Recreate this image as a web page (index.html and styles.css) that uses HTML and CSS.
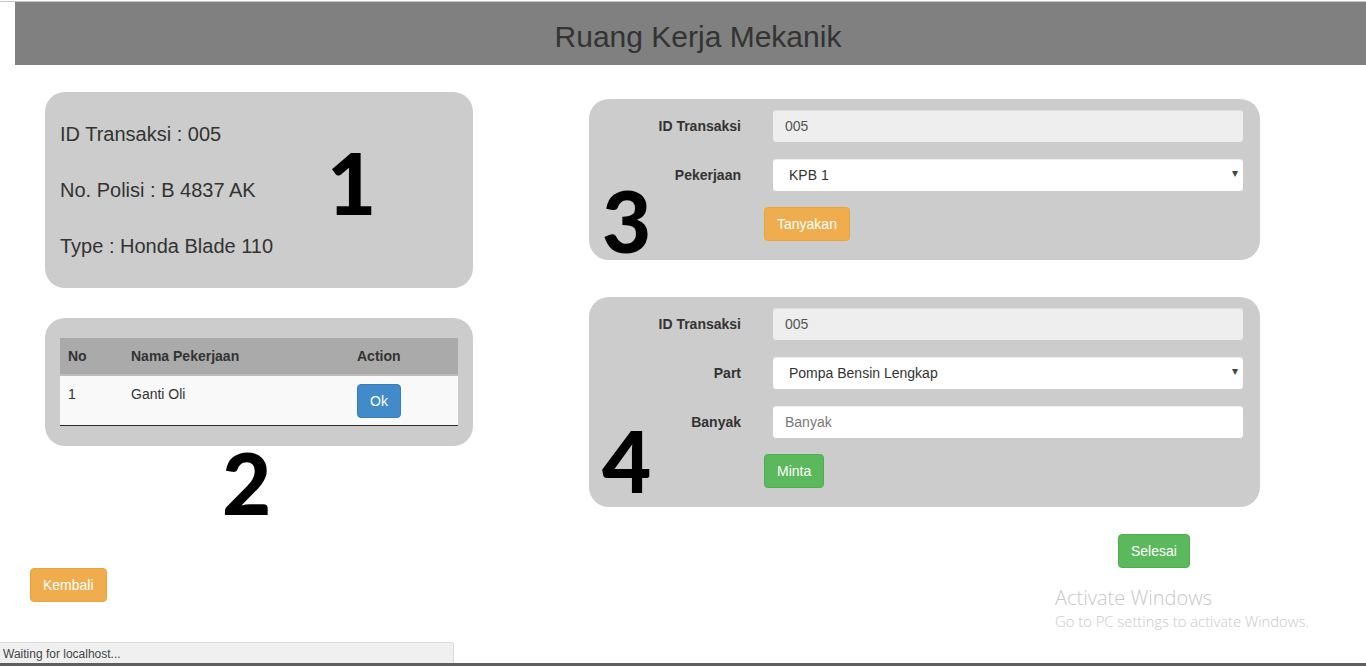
FILE: index.html
```html
<!DOCTYPE html>
<html lang="id">
<head>
<meta charset="utf-8">
<title>Ruang Kerja Mekanik</title>
<link rel="stylesheet" href="styles.css">
</head>
<body>
<div class="topline"></div>
<header class="header"><h1 class="title">Ruang Kerja Mekanik</h1></header>
<main class="main">
  <section class="left">
    <div class="panel info">
      <p class="info-line">ID Transaksi : 005</p>
      <p class="info-line">No. Polisi : B 4837 AK</p>
      <p class="info-line">Type : Honda Blade 110</p>
      <span class="mark mark-1">1</span>
    </div>
    <div class="panel jobs">
      <table class="table">
        <thead>
          <tr><th class="c-no">No</th><th class="c-name">Nama Pekerjaan</th><th class="c-act">Action</th></tr>
        </thead>
        <tbody>
          <tr><td>1</td><td>Ganti Oli</td><td><button class="btn btn-primary" type="button">Ok</button></td></tr>
        </tbody>
      </table>
    </div>
    <div class="mark-2">2</div>
    <div class="back-row"><button class="btn btn-warning" type="button">Kembali</button></div>
  </section>
  <section class="right">
    <form class="panel form form-ask">
      <div class="form-row"><label class="label">ID Transaksi</label><input class="control readonly" type="text" value="005" readonly></div>
      <div class="form-row"><label class="label">Pekerjaan</label><div class="select-wrap"><select class="control select"><option>KPB 1</option></select></div></div>
      <div class="btn-row"><button class="btn btn-warning" type="button">Tanyakan</button></div>
      <span class="mark mark-3">3</span>
    </form>
    <form class="panel form form-part">
      <div class="form-row"><label class="label">ID Transaksi</label><input class="control readonly" type="text" value="005" readonly></div>
      <div class="form-row"><label class="label">Part</label><div class="select-wrap"><select class="control select"><option>Pompa Bensin Lengkap</option></select></div></div>
      <div class="form-row"><label class="label">Banyak</label><input class="control" type="text" placeholder="Banyak"></div>
      <div class="btn-row"><button class="btn btn-success" type="button">Minta</button></div>
      <span class="mark mark-4">4</span>
    </form>
    <div class="done-row"><button class="btn btn-success" type="button">Selesai</button></div>
  </section>
</main>
<div class="watermark">
  <div class="wm-title">Activate Windows</div>
  <div class="wm-sub">Go to PC settings to activate Windows.</div>
</div>
<div class="statusbar">Waiting for localhost...</div>
<div class="taskbar"></div>
</body>
</html>
```
FILE: styles.css
```css
* { box-sizing: border-box; }
html, body { margin: 0; padding: 0; }
body {
  width: 1366px;
  height: 666px;
  overflow: hidden;
  position: relative;
  background: #fff;
  font-family: "Liberation Sans", Arial, sans-serif;
  font-size: 14px;
  color: #333;
}
.topline { margin-top: 1px; height: 1px; background: #c4c4c4; }
.header {
  margin-left: 15px;
  height: 63px;
  background: #808080;
  padding: 6px 0 0 15px;
}
.title {
  margin: 0;
  font-size: 30px;
  font-weight: normal;
  line-height: 57px;
  text-align: center;
  color: #333;
}
.main {
  display: flex;
  align-items: flex-start;
  padding: 27px 0 0 45px;
}
.left { width: 428px; }
.right { width: 671px; margin-left: 116px; padding-top: 7px; }
.panel {
  position: relative;
  background: #ccc;
  border-radius: 20px;
}
.info { height: 196px; padding: 14px 15px; }
.info-line { margin: 0; font-size: 20px; line-height: 56px; }
.mark {
  position: absolute;
  font-family: Lato, "DejaVu Sans", sans-serif;
  font-weight: 900;
  font-size: 85px;
  line-height: 85px;
  color: #000;
}
.mark-1 { left: 282px; top: 48px; }
.mark-3 { left: 13px; top: 79px; }
.mark-4 { left: 13px; top: 121px; }
.mark-2 {
  margin-top: -6px;
  height: 88px;
  padding-left: 177px;
  font-family: Lato, "DejaVu Sans", sans-serif;
  font-weight: 900;
  font-size: 85px;
  line-height: 85px;
  color: #000;
}
.jobs { margin-top: 30px; padding: 20px 14px 20px 15px; }
.table { width: 398px; border-collapse: collapse; }
.table th {
  background: #aaa;
  text-align: left;
  font-weight: bold;
  padding: 8px;
  line-height: 20px;
  border-bottom: 2px solid #bdbdbd;
}
.c-no { width: 63px; }
.c-name { width: 226px; }
.table td {
  background: #f9f9f9;
  padding: 8px 8px 7px;
  line-height: 20px;
  vertical-align: top;
  border-bottom: 1px solid #2b2b2b;
}
.btn {
  display: inline-block;
  font-family: "Liberation Sans", Arial, sans-serif;
  font-size: 14px;
  line-height: 20px;
  padding: 6px 12px;
  border: 1px solid transparent;
  border-radius: 4px;
  color: #fff;
  cursor: pointer;
}
.btn-primary { background: #428bca; border-color: #357ebd; }
.btn-warning { background: #f0ad4e; border-color: #eea236; }
.btn-success { background: #5cb85c; border-color: #4cae4c; }
.back-row { margin: 40px 0 0 -15px; }
.form { padding: 10px 15px 19px 0; }
.form-ask { height: 161px; }
.form-part { margin-top: 37px; height: 210px; }
.form-row { display: flex; align-items: center; margin-bottom: 15px; }
.label {
  width: 152px;
  text-align: right;
  font-weight: bold;
  line-height: 34px;
}
.control {
  margin-left: 31px;
  width: 472px;
  height: 34px;
  padding: 6px 12px;
  font-family: "Liberation Sans", Arial, sans-serif;
  font-size: 14px;
  color: #555;
  background: #fff;
  border: 1px solid #ccc;
  border-radius: 4px;
  box-shadow: inset 0 1px 1px rgba(0,0,0,.075);
  outline: none;
}
.control::placeholder { color: #777; }
.readonly { background: #eee; }
.select-wrap { position: relative; margin-left: 31px; }
.select-wrap::after {
  content: "\25BE";
  position: absolute;
  right: 6px;
  top: 8px;
  font-size: 12px;
  color: #444;
  pointer-events: none;
}
.select {
  margin-left: 0;
  appearance: none;
  -webkit-appearance: none;
  padding-left: 16px;
  color: #333;
}
.btn-row { padding-left: 175px; }
.done-row { margin: 27px 0 0 529px; }
.watermark {
  position: absolute;
  left: 1055px;
  top: 585px;
  color: #c8c8c8;
  font-family: "Open Sans", sans-serif;
  font-weight: 300;
}
.wm-title { font-size: 20px; line-height: 26px; }
.wm-sub { font-size: 14.8px; line-height: 20px; }
.statusbar {
  position: absolute;
  left: 0;
  bottom: 3px;
  width: 454px;
  height: 21px;
  background: #f0f0f0;
  border: 1px solid #dcdcdc;
  border-left: 0;
  border-bottom: 0;
  border-radius: 0 3px 0 0;
  padding: 4px 0 0 3px;
  font-size: 12px;
  line-height: 15px;
  color: #444;
}
.taskbar {
  position: absolute;
  left: 0;
  bottom: 0;
  width: 100%;
  height: 3px;
  background: #5e5e5e;
}
```
